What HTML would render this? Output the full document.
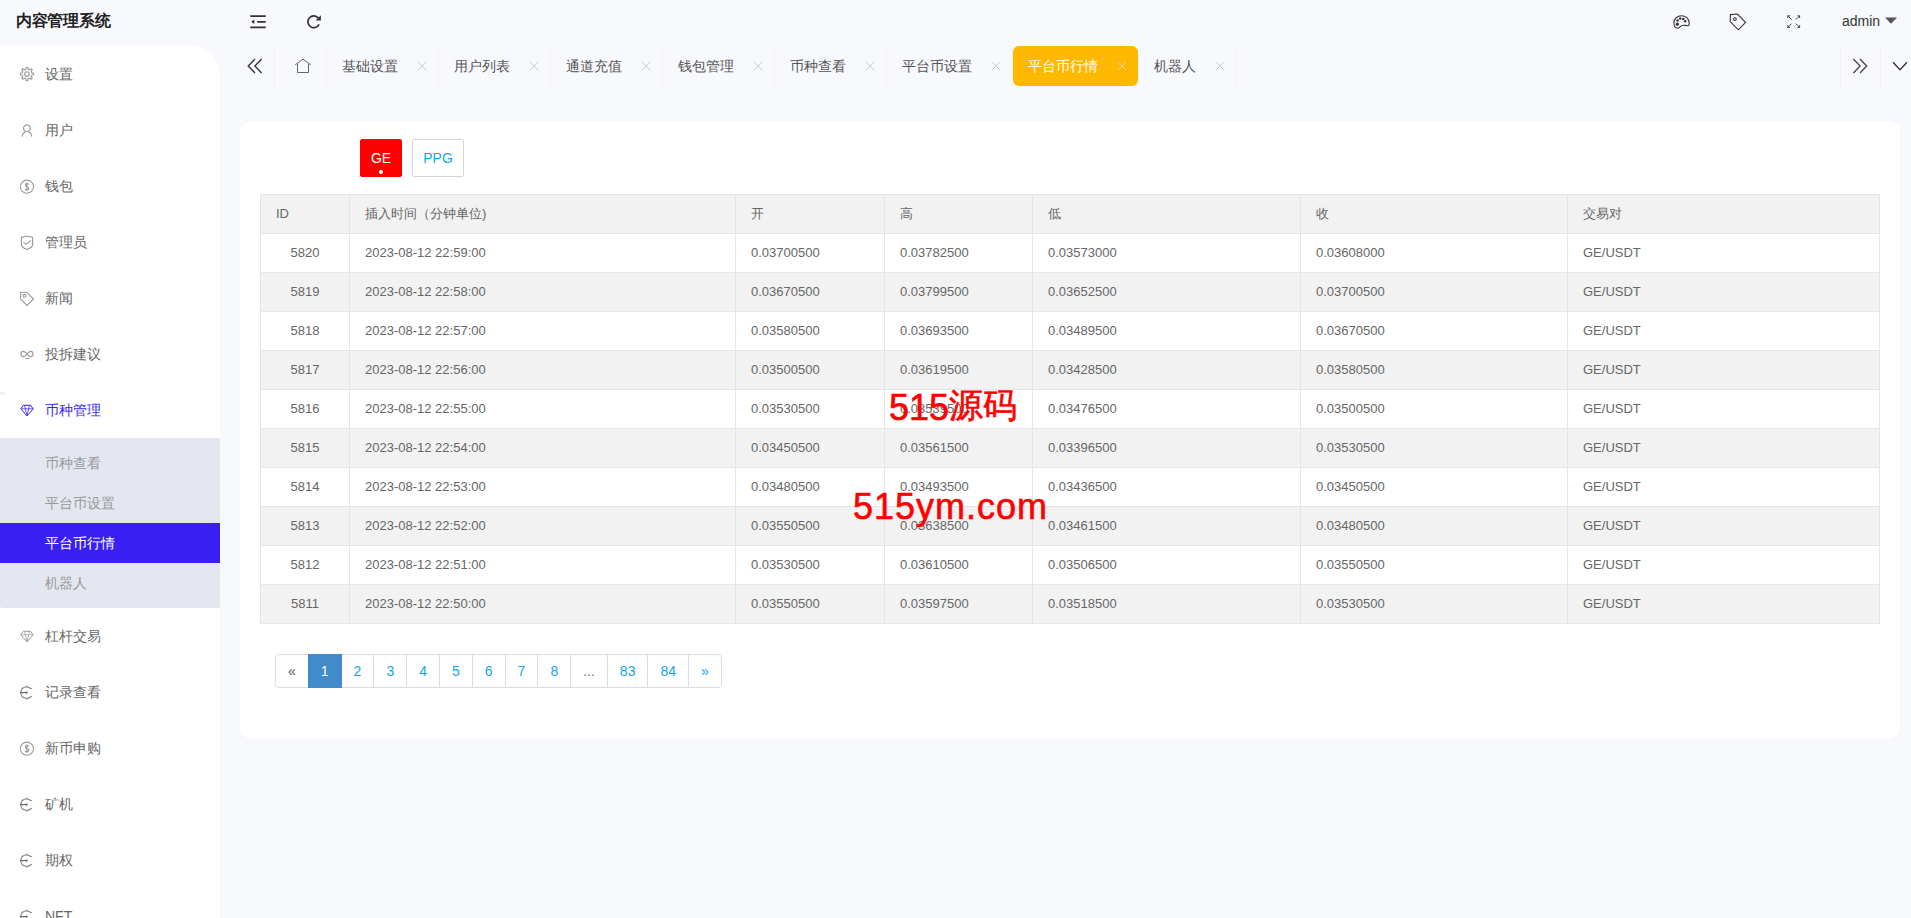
<!DOCTYPE html>
<html><head><meta charset="utf-8">
<style>
*{box-sizing:border-box;margin:0;padding:0}
html,body{width:1911px;height:918px;overflow:hidden}
body{background:#f8f9fd;font-family:"Liberation Sans",sans-serif;color:#666;position:relative}
.abs{position:absolute}
.logo{left:16px;top:0;height:42px;line-height:42px;font-size:16px;font-weight:bold;color:#222;letter-spacing:-0.3px}
.side{left:0;top:46px;width:220px;height:872px;background:#fff;border-top-right-radius:30px;overflow:hidden}
.mi{position:absolute;left:0;width:220px;height:56px;line-height:56px;font-size:14px;color:#666}
.mi span{position:absolute;left:45px;top:0}
.mi svg{position:absolute;left:20px;top:21px;width:14px;height:14px}
.sub{position:absolute;left:0;top:392px;width:220px;height:170px;background:#e4e7ef;border-radius:2px}
.si{position:absolute;left:0;width:220px;height:40px;line-height:40px;font-size:14px;color:#999}
.si span{position:absolute;left:45px}
.si.on{background:#3a1ff5;color:#fff}
.tabsep{position:absolute;top:46px;width:1px;height:40px;background:#f2f1f0}
.tab{position:absolute;top:46px;height:40px;line-height:40px;font-size:14px;color:#555}
.tab .x{position:absolute;top:16px;width:8px;height:8px}
.card{left:240px;top:121px;width:1660px;height:618px;background:#fff;border-radius:11px;box-shadow:0 0 1px rgba(0,0,0,0.06)}
.btn{position:absolute;top:18px;height:38px;line-height:36px;font-size:14px;text-align:center;border-radius:2px}
table{position:absolute;left:20px;top:73px;border-collapse:collapse;table-layout:fixed;width:1620px}
td,th{border:1px solid #e6e6e6;height:39px;padding:0 15px;font-size:13px;font-weight:normal;text-align:left;color:#666;line-height:20px;white-space:nowrap}
th{background:#f2f2f2}
tbody tr:nth-child(even) td{background:#f2f2f2}
td.c{text-align:center}
.pg{position:absolute;left:35px;top:533px;height:34px;display:flex}
.pg a{display:block;height:34px;line-height:20px;padding:6px 12px;border:1px solid #ddd;margin-left:-1px;font-size:14px;color:#14a6ec;background:#fff;text-decoration:none}
.pg a:first-child{margin-left:0;border-radius:4px 0 0 4px;color:#555}
.pg a:last-child{border-radius:0 4px 4px 0}
.pg a.on{background:#428bca;border-color:#428bca;color:#fff;position:relative;z-index:2}
.wm{position:absolute;color:#f00;font-weight:500}
</style></head><body>
<div class="abs logo">内容管理系统</div>

<div class="abs" style="left:0;top:392px;width:5px;height:3px;background:#eeeefb;z-index:3"></div>
<div class="abs side">
<div class="mi" style="top:0px"><svg viewBox="0 0 14 14" fill="none" stroke="#999" stroke-width="1.1" overflow="visible"><path d="M6.12,0.46 L7.88,0.46 L8.14,2.24 L9.56,2.82 L11.00,1.75 L12.25,3.00 L11.18,4.44 L11.76,5.86 L13.54,6.12 L13.54,7.88 L11.76,8.14 L11.18,9.56 L12.25,11.00 L11.00,12.25 L9.56,11.18 L8.14,11.76 L7.88,13.54 L6.12,13.54 L5.86,11.76 L4.44,11.18 L3.00,12.25 L1.75,11.00 L2.82,9.56 L2.24,8.14 L0.46,7.88 L0.46,6.12 L2.24,5.86 L2.82,4.44 L1.75,3.00 L3.00,1.75 L4.44,2.82 L5.86,2.24Z"/><circle cx="7" cy="7" r="2.3"/></svg><span>设置</span></div>
<div class="mi" style="top:56px"><svg viewBox="0 0 14 14" fill="none" stroke="#999" stroke-width="1.1" overflow="visible"><circle cx="6.9" cy="5.25" r="3.3"/><path d="M2,13.6 C2.2,11.2 3.5,9.6 5.2,8.9 M8.6,8.9 C10.3,9.6 11.6,11.2 11.8,13.6"/></svg><span>用户</span></div>
<div class="mi" style="top:112px"><svg viewBox="0 0 14 14" fill="none" stroke="#999" stroke-width="1.1" overflow="visible"><circle cx="6.9" cy="7.7" r="6.6"/><path d="M8.5,5.5 C8.2,4.8 7.6,4.5 6.9,4.5 C6,4.5 5.3,5.1 5.3,5.9 C5.3,7.8 8.6,7.3 8.6,9.4 C8.6,10.3 7.9,10.9 6.9,10.9 C6.1,10.9 5.5,10.5 5.2,9.8 M6.9,3.4 V12"/></svg><span>钱包</span></div>
<div class="mi" style="top:168px"><svg viewBox="0 0 14 14" fill="none" stroke="#999" stroke-width="1.1" overflow="visible"><path d="M6.95,1.2 C5,1.3 3.2,2 1.4,2.5 V10 C1.9,12 4.5,13.6 6.95,14.5 C9.4,13.6 12,12 12.6,10 V2.5 C10.7,2 8.9,1.3 6.95,1.2Z M3.5,7.4 L6.1,9.3 L10.7,5.4"/></svg><span>管理员</span></div>
<div class="mi" style="top:224px"><svg viewBox="0 0 14 14" fill="none" stroke="#999" stroke-width="1.1" overflow="visible"><path d="M0.6,1.2 H6.6 L13.5,8.1 L6.9,14.5 L0.6,8.1Z"/><circle cx="4.4" cy="4.8" r="1.4"/></svg><span>新闻</span></div>
<div class="mi" style="top:280px"><svg viewBox="0 0 14 14" fill="none" stroke="#999" stroke-width="1.1" overflow="visible"><path d="M7,7 C5.6,5.6 4.8,4.4 3.4,4.4 C2,4.4 1,5.5 1,7 C1,8.5 2,9.6 3.4,9.6 C4.8,9.6 5.6,8.4 7,7 C8.4,5.6 9.2,4.4 10.6,4.4 C12,4.4 13,5.5 13,7 C13,8.5 12,9.6 10.6,9.6 C9.2,9.6 8.4,8.4 7,7Z M5.3,11.5 H9.4"/></svg><span>投拆建议</span></div>
<div class="mi" style="top:336px;color:#3a1ff5"><svg viewBox="0 0 14 14" fill="none" stroke="#3a1ff5" stroke-width="1.1" overflow="visible"><path d="M3.3,2.3 H10.6 L13.2,5.8 L7,12.9 L0.8,5.8Z" stroke-width="1"/><path d="M1.2,5.8 H12.8 M4.6,2.4 L5.3,5.8 L7,12.6 L8.7,5.8 L9.4,2.4" stroke-width="0.75"/></svg><span>币种管理</span></div>
<div class="mi" style="top:562px"><svg viewBox="0 0 14 14" fill="none" stroke="#999" stroke-width="1.1" overflow="visible"><path d="M3.3,2.3 H10.6 L13.2,5.8 L7,12.9 L0.8,5.8Z" stroke-width="1"/><path d="M1.2,5.8 H12.8 M4.6,2.4 L5.3,5.8 L7,12.6 L8.7,5.8 L9.4,2.4" stroke-width="0.75"/></svg><span>杠杆交易</span></div>
<div class="mi" style="top:618px"><svg viewBox="0 0 14 14" fill="none" stroke="#999" stroke-width="1.1" overflow="visible"><path d="M11.04,3.87 A5.8,5.8 0 1 0 11.04,11.33 M11.04,3.87 L11.81,3.23 M6.60,1.80 L6.60,0.80 M2.50,3.50 L1.79,2.79 M0.80,7.60 L-0.20,7.60 M2.50,11.70 L1.79,12.41 M6.60,13.40 L6.60,14.40 M11.04,11.33 L11.81,11.97" stroke="#888" stroke-width="1.2"/><path d="M0.6,7.6 H6.2" stroke="#666" stroke-width="1.2"/><circle cx="6.6" cy="7.6" r="1.1" fill="#666" stroke="none"/></svg><span>记录查看</span></div>
<div class="mi" style="top:674px"><svg viewBox="0 0 14 14" fill="none" stroke="#999" stroke-width="1.1" overflow="visible"><circle cx="6.9" cy="7.7" r="6.6"/><path d="M8.5,5.5 C8.2,4.8 7.6,4.5 6.9,4.5 C6,4.5 5.3,5.1 5.3,5.9 C5.3,7.8 8.6,7.3 8.6,9.4 C8.6,10.3 7.9,10.9 6.9,10.9 C6.1,10.9 5.5,10.5 5.2,9.8 M6.9,3.4 V12"/></svg><span>新币申购</span></div>
<div class="mi" style="top:730px"><svg viewBox="0 0 14 14" fill="none" stroke="#999" stroke-width="1.1" overflow="visible"><path d="M11.04,3.87 A5.8,5.8 0 1 0 11.04,11.33 M11.04,3.87 L11.81,3.23 M6.60,1.80 L6.60,0.80 M2.50,3.50 L1.79,2.79 M0.80,7.60 L-0.20,7.60 M2.50,11.70 L1.79,12.41 M6.60,13.40 L6.60,14.40 M11.04,11.33 L11.81,11.97" stroke="#888" stroke-width="1.2"/><path d="M0.6,7.6 H6.2" stroke="#666" stroke-width="1.2"/><circle cx="6.6" cy="7.6" r="1.1" fill="#666" stroke="none"/></svg><span>矿机</span></div>
<div class="mi" style="top:786px"><svg viewBox="0 0 14 14" fill="none" stroke="#999" stroke-width="1.1" overflow="visible"><path d="M11.04,3.87 A5.8,5.8 0 1 0 11.04,11.33 M11.04,3.87 L11.81,3.23 M6.60,1.80 L6.60,0.80 M2.50,3.50 L1.79,2.79 M0.80,7.60 L-0.20,7.60 M2.50,11.70 L1.79,12.41 M6.60,13.40 L6.60,14.40 M11.04,11.33 L11.81,11.97" stroke="#888" stroke-width="1.2"/><path d="M0.6,7.6 H6.2" stroke="#666" stroke-width="1.2"/><circle cx="6.6" cy="7.6" r="1.1" fill="#666" stroke="none"/></svg><span>期权</span></div>
<div class="mi" style="top:842px"><svg viewBox="0 0 14 14" fill="none" stroke="#999" stroke-width="1.1" overflow="visible"><path d="M11.04,3.87 A5.8,5.8 0 1 0 11.04,11.33 M11.04,3.87 L11.81,3.23 M6.60,1.80 L6.60,0.80 M2.50,3.50 L1.79,2.79 M0.80,7.60 L-0.20,7.60 M2.50,11.70 L1.79,12.41 M6.60,13.40 L6.60,14.40 M11.04,11.33 L11.81,11.97" stroke="#888" stroke-width="1.2"/><path d="M0.6,7.6 H6.2" stroke="#666" stroke-width="1.2"/><circle cx="6.6" cy="7.6" r="1.1" fill="#666" stroke="none"/></svg><span>NFT</span></div>
<div class="sub">
<div class="si" style="top:5px"><span>币种查看</span></div>
<div class="si" style="top:45px"><span>平台币设置</span></div>
<div class="si on" style="top:85px"><span>平台币行情</span></div>
<div class="si" style="top:125px"><span>机器人</span></div>
</div>
</div>

<svg class="abs" style="left:250px;top:15px;width:16px;height:14px" viewBox="0 0 16 14" fill="none" stroke="#333" stroke-width="1.7"><path d="M0.3,1.2 H15.7 M7.2,6.8 H15.7 M0.3,12.4 H15.7"/><path d="M1.2,6.8 L4.3,4.6 V9Z" fill="#333" stroke="none"/></svg>
<svg class="abs" style="left:306px;top:14px;width:16px;height:16px" viewBox="0 0 16 16" fill="none" stroke="#333" stroke-width="1.7"><path d="M13.1,10.4 A5.9,5.9 0 1 1 12.4,4.1"/><path d="M14.9,1.2 V6.5 H9.6Z" fill="#333" stroke="none"/></svg>
<svg class="abs" style="left:1673px;top:15px;width:17px;height:14px" viewBox="0 0 17 14" fill="none" stroke="#333" stroke-width="1.1"><path d="M8.5,0.8 C4.2,0.8 0.9,3.7 0.9,7.6 C0.9,11 2.6,13.2 4.7,13.2 C6.3,13.2 7,11.6 8.6,10.6 C10.3,9.6 12.2,10.6 14.4,10.7 C15.8,10.7 16.3,9.6 16.3,8.2 C16.3,3.8 12.8,0.8 8.5,0.8Z"/><circle cx="4.3" cy="9.2" r="1.1" fill="#333"/><circle cx="4.5" cy="5.6" r="0.7" fill="#333"/><circle cx="7.2" cy="3.6" r="0.7" fill="#333"/><circle cx="10.3" cy="3.9" r="0.7" fill="#333"/><circle cx="12.2" cy="6.3" r="0.7" fill="#333"/></svg>
<svg class="abs" style="left:1729px;top:13px;width:17px;height:18px" viewBox="0 0 17 18" fill="none" stroke="#333" stroke-width="1.1"><path d="M1.4,1.6 L8.4,1 L16.6,9.4 L9.4,16.8 L1.2,8.6Z"/><circle cx="5.9" cy="6.1" r="1.4"/></svg>
<svg class="abs" style="left:1787px;top:15px;width:14px;height:14px" viewBox="0 0 14 14" fill="none" stroke="#444" stroke-width="1"><path d="M0.8,0.8 L4.6,4.6 M0.8,0.8 H3 M0.8,0.8 V3 M12.6,0.8 L8.8,4.6 M12.6,0.8 H10.4 M12.6,0.8 V3 M0.8,12.4 L4.6,8.6 M0.8,12.4 H3 M0.8,12.4 V10.2 M12.6,12.4 L8.8,8.6 M12.6,12.4 H10.4 M12.6,12.4 V10.2"/></svg>
<div class="abs" style="left:1842px;top:12px;font-size:14px;line-height:18px;color:#333">admin</div>
<svg class="abs" style="left:1885px;top:17px;width:12px;height:7px" viewBox="0 0 12 7"><path d="M0,0.5 H12 L6,6.8Z" fill="#555"/></svg>

<svg class="abs" style="left:247px;top:58px;width:16px;height:16px" viewBox="0 0 16 16" fill="none" stroke="#333" stroke-width="1.4"><path d="M8,1 L1.3,8 L8,15 M14.6,1 L7.9,8 L14.6,15"/></svg>
<svg class="abs" style="left:294px;top:58px;width:18px;height:16px" viewBox="0 0 18 16" fill="none" stroke="#666" stroke-width="1"><path d="M1.2,6.8 L9,1.2 L16.8,6.8 M3.5,5.6 V14.5 H14.5 V5.6"/></svg>
<div class="tabsep" style="left:274px"></div>
<div class="tabsep" style="left:326px"></div>
<div class="tabsep" style="left:438px"></div>
<div class="tabsep" style="left:550px"></div>
<div class="tabsep" style="left:662px"></div>
<div class="tabsep" style="left:774px"></div>
<div class="tabsep" style="left:886px"></div>
<div class="tabsep" style="left:1012px"></div>
<div class="tabsep" style="left:1236px"></div>
<div class="tabsep" style="left:1840px"></div>
<div class="tabsep" style="left:1880px"></div>
<div class="abs" style="left:1013px;top:46px;width:125px;height:40px;background:#ffb800;border-radius:6px"></div>
<div class="tab" style="left:342px;color:#555">基础设置</div>
<svg class="abs" style="left:418px;top:62px;width:8px;height:8px" viewBox="0 0 8 8" stroke="#c9ccd3" stroke-width="1"><path d="M0,0 L8,8 M8,0 L0,8"/></svg>
<div class="tab" style="left:454px;color:#555">用户列表</div>
<svg class="abs" style="left:530px;top:62px;width:8px;height:8px" viewBox="0 0 8 8" stroke="#c9ccd3" stroke-width="1"><path d="M0,0 L8,8 M8,0 L0,8"/></svg>
<div class="tab" style="left:566px;color:#555">通道充值</div>
<svg class="abs" style="left:642px;top:62px;width:8px;height:8px" viewBox="0 0 8 8" stroke="#c9ccd3" stroke-width="1"><path d="M0,0 L8,8 M8,0 L0,8"/></svg>
<div class="tab" style="left:678px;color:#555">钱包管理</div>
<svg class="abs" style="left:754px;top:62px;width:8px;height:8px" viewBox="0 0 8 8" stroke="#c9ccd3" stroke-width="1"><path d="M0,0 L8,8 M8,0 L0,8"/></svg>
<div class="tab" style="left:790px;color:#555">币种查看</div>
<svg class="abs" style="left:866px;top:62px;width:8px;height:8px" viewBox="0 0 8 8" stroke="#c9ccd3" stroke-width="1"><path d="M0,0 L8,8 M8,0 L0,8"/></svg>
<div class="tab" style="left:902px;color:#555">平台币设置</div>
<svg class="abs" style="left:992px;top:62px;width:8px;height:8px" viewBox="0 0 8 8" stroke="#c9ccd3" stroke-width="1"><path d="M0,0 L8,8 M8,0 L0,8"/></svg>
<div class="tab" style="left:1028px;color:#fff">平台币行情</div>
<svg class="abs" style="left:1118px;top:62px;width:8px;height:8px" viewBox="0 0 8 8" stroke="#e9d29c" stroke-width="1"><path d="M0,0 L8,8 M8,0 L0,8"/></svg>
<div class="tab" style="left:1154px;color:#555">机器人</div>
<svg class="abs" style="left:1216px;top:62px;width:8px;height:8px" viewBox="0 0 8 8" stroke="#c9ccd3" stroke-width="1"><path d="M0,0 L8,8 M8,0 L0,8"/></svg>
<svg class="abs" style="left:1852px;top:58px;width:16px;height:16px" viewBox="0 0 16 16" fill="none" stroke="#444" stroke-width="1.3"><path d="M1.4,1 L8.1,8 L1.4,15 M8,1 L14.7,8 L8,15"/></svg>
<svg class="abs" style="left:1892px;top:61px;width:16px;height:10px" viewBox="0 0 16 10" fill="none" stroke="#333" stroke-width="1.3"><path d="M1,1.3 L8,8.7 L15,1.3"/></svg>
<div class="abs card">
<div class="btn" style="left:120px;width:42px;background:#f00;color:#fff;border:1px solid #f00">GE<i style="position:absolute;left:18px;top:30px;width:4px;height:4px;border-radius:50%;background:#fff"></i></div>
<div class="btn" style="left:172px;width:52px;background:#fff;color:#14a6ec;border:1px solid #d6d6d6">PPG</div>
<table><colgroup><col style="width:89px"><col style="width:386px"><col style="width:149px"><col style="width:148px"><col style="width:268px"><col style="width:267px"><col style="width:312px"></colgroup>
<thead><tr><th>ID</th><th>插入时间（分钟单位)</th><th>开</th><th>高</th><th>低</th><th>收</th><th>交易对</th></tr></thead><tbody>
<tr><td class="c">5820</td><td>2023-08-12 22:59:00</td><td>0.03700500</td><td>0.03782500</td><td>0.03573000</td><td>0.03608000</td><td>GE/USDT</td></tr>
<tr><td class="c">5819</td><td>2023-08-12 22:58:00</td><td>0.03670500</td><td>0.03799500</td><td>0.03652500</td><td>0.03700500</td><td>GE/USDT</td></tr>
<tr><td class="c">5818</td><td>2023-08-12 22:57:00</td><td>0.03580500</td><td>0.03693500</td><td>0.03489500</td><td>0.03670500</td><td>GE/USDT</td></tr>
<tr><td class="c">5817</td><td>2023-08-12 22:56:00</td><td>0.03500500</td><td>0.03619500</td><td>0.03428500</td><td>0.03580500</td><td>GE/USDT</td></tr>
<tr><td class="c">5816</td><td>2023-08-12 22:55:00</td><td>0.03530500</td><td>0.03539500</td><td>0.03476500</td><td>0.03500500</td><td>GE/USDT</td></tr>
<tr><td class="c">5815</td><td>2023-08-12 22:54:00</td><td>0.03450500</td><td>0.03561500</td><td>0.03396500</td><td>0.03530500</td><td>GE/USDT</td></tr>
<tr><td class="c">5814</td><td>2023-08-12 22:53:00</td><td>0.03480500</td><td>0.03493500</td><td>0.03436500</td><td>0.03450500</td><td>GE/USDT</td></tr>
<tr><td class="c">5813</td><td>2023-08-12 22:52:00</td><td>0.03550500</td><td>0.03638500</td><td>0.03461500</td><td>0.03480500</td><td>GE/USDT</td></tr>
<tr><td class="c">5812</td><td>2023-08-12 22:51:00</td><td>0.03530500</td><td>0.03610500</td><td>0.03506500</td><td>0.03550500</td><td>GE/USDT</td></tr>
<tr><td class="c">5811</td><td>2023-08-12 22:50:00</td><td>0.03550500</td><td>0.03597500</td><td>0.03518500</td><td>0.03530500</td><td>GE/USDT</td></tr>
</tbody></table>
<div class="pg"><a>&laquo;</a><a class="on">1</a><a>2</a><a>3</a><a>4</a><a>5</a><a>6</a><a>7</a><a>8</a><a style="color:#777">...</a><a>83</a><a>84</a><a>&raquo;</a></div>
</div>
<div class="wm" style="left:889px;top:383px;font-size:36px;line-height:44px;-webkit-text-stroke:0.6px #f00">515<span style="font-size:34px;vertical-align:3px">源码</span></div>
<div class="wm" style="left:853px;top:485px;font-size:36px;line-height:44px;letter-spacing:1px;-webkit-text-stroke:0.6px #f00">515ym.com</div>
</body></html>
